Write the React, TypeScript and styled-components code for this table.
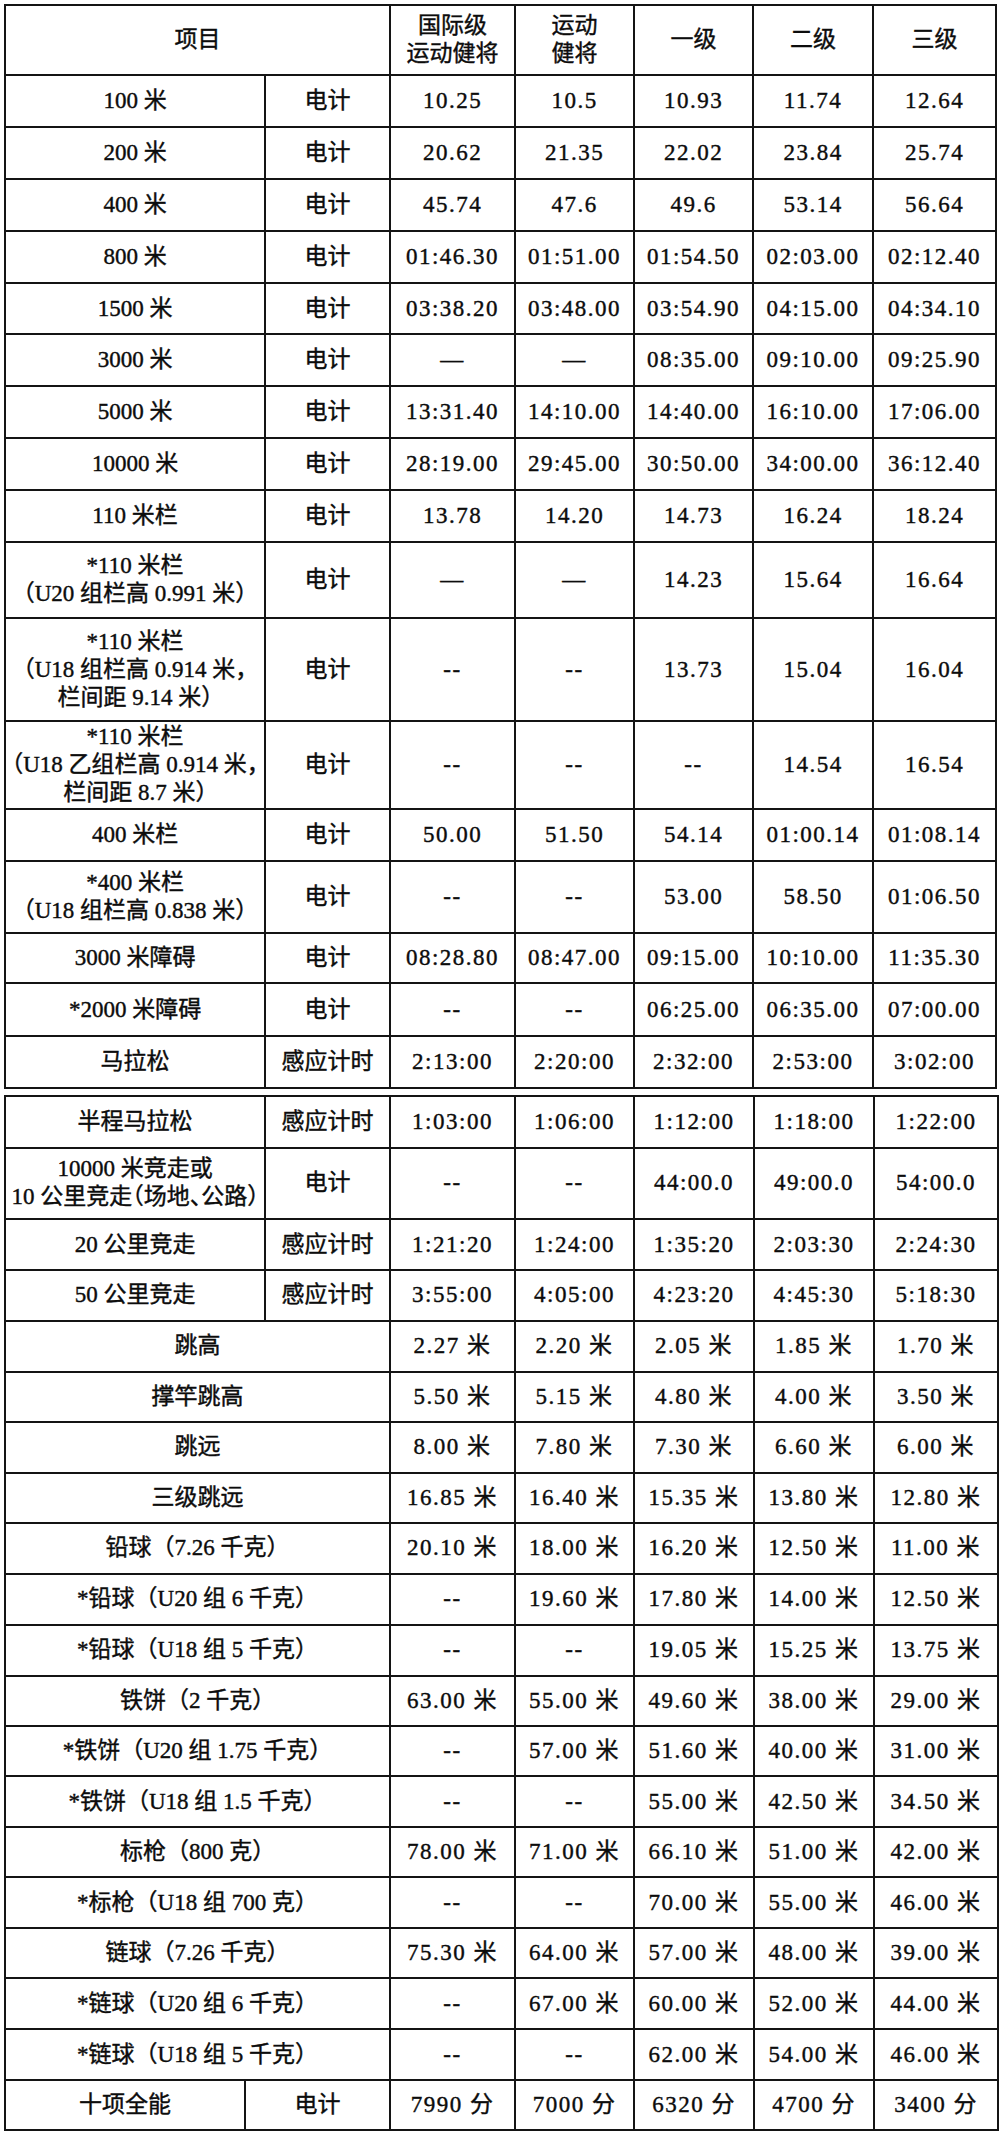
import React from 'react';
import styled, { createGlobalStyle } from 'styled-components';

const GlobalStyle = createGlobalStyle`
  body {
    margin: 0;
    background: #fff;
  }
`;

const Page = styled.div`
  padding: 3.7px 0 0 4px;
  display: flex;
  flex-direction: column;
  gap: 6px;
  font-family: 'Liberation Serif', 'Noto Sans CJK SC', serif;
  font-size: 23px;
  color: #0c0c0c;
`;

const Sheet = styled.div<{ $cols: string; $rows: string }>`
  display: grid;
  grid-template-columns: ${(p) => p.$cols};
  grid-template-rows: ${(p) => p.$rows};
  gap: 2px;
  padding: 2px;
  width: max-content;
  background: #141414;
`;

const Cell = styled.div<{ $span: number; $kind: 'name' | 'value' | 'tight' }>`
  grid-column: span ${(p) => p.$span};
  display: flex;
  align-items: center;
  justify-content: center;
  background: #fff;
  text-align: center;
  line-height: 28px;
  white-space: pre;
  -webkit-text-stroke: 0.4px currentColor;
  letter-spacing: ${(p) => (p.$kind === 'value' ? '1.5px' : '0')};
  font-feature-settings: ${(p) => (p.$kind === 'tight' ? '"halt"' : 'normal')};
`;

type Row = { h: number; cells: (string | [string, number])[] };

const T = '电计';
const G = '感应计时';

const upper: Row[] = [
  { h: 68.6, cells: [['项目', 2], '国际级\n运动健将', '运动\n健将', '一级', '二级', '三级'] },
  { h: 49.7, cells: ['100 米', T, '10.25', '10.5', '10.93', '11.74', '12.64'] },
  { h: 50, cells: ['200 米', T, '20.62', '21.35', '22.02', '23.84', '25.74'] },
  { h: 49.7, cells: ['400 米', T, '45.74', '47.6', '49.6', '53.14', '56.64'] },
  { h: 50, cells: ['800 米', T, '01:46.30', '01:51.00', '01:54.50', '02:03.00', '02:12.40'] },
  { h: 49.8, cells: ['1500 米', T, '03:38.20', '03:48.00', '03:54.90', '04:15.00', '04:34.10'] },
  { h: 49.5, cells: ['3000 米', T, '—', '—', '08:35.00', '09:10.00', '09:25.90'] },
  { h: 50, cells: ['5000 米', T, '13:31.40', '14:10.00', '14:40.00', '16:10.00', '17:06.00'] },
  { h: 50, cells: ['10000 米', T, '28:19.00', '29:45.00', '30:50.00', '34:00.00', '36:12.40'] },
  { h: 49.7, cells: ['110 米栏', T, '13.78', '14.20', '14.73', '16.24', '18.24'] },
  { h: 74.6, cells: ['*110 米栏\n（U20 组栏高 0.991 米）', T, '—', '—', '14.23', '15.64', '16.64'] },
  { h: 100.7, cells: ['*110 米栏\n（U18 组栏高 0.914 米，\n栏间距 9.14 米）', T, '--', '--', '13.73', '15.04', '16.04'] },
  { h: 86.3, cells: ['*110 米栏\n（U18 乙组栏高 0.914 米，\n栏间距 8.7 米）', T, '--', '--', '--', '14.54', '16.54'] },
  { h: 49.7, cells: ['400 米栏', T, '50.00', '51.50', '54.14', '01:00.14', '01:08.14'] },
  { h: 69.7, cells: ['*400 米栏\n（U18 组栏高 0.838 米）', T, '--', '--', '53.00', '58.50', '01:06.50'] },
  { h: 48.6, cells: ['3000 米障碍', T, '08:28.80', '08:47.00', '09:15.00', '10:10.00', '11:35.30'] },
  { h: 50.7, cells: ['*2000 米障碍', T, '--', '--', '06:25.00', '06:35.00', '07:00.00'] },
  { h: 49.7, cells: ['马拉松', G, '2:13:00', '2:20:00', '2:32:00', '2:53:00', '3:02:00'] },
];

const lower: Row[] = [
  { h: 50, cells: [['半程马拉松', 2], G, '1:03:00', '1:06:00', '1:12:00', '1:18:00', '1:22:00'] },
  { h: 69.6, cells: [['10000 米竞走或\n10 公里竞走（场地、公路）', 2], T, '--', '--', '44:00.0', '49:00.0', '54:00.0'] },
  { h: 48.7, cells: [['20 公里竞走', 2], G, '1:21:20', '1:24:00', '1:35:20', '2:03:30', '2:24:30'] },
  { h: 48.7, cells: [['50 公里竞走', 2], G, '3:55:00', '4:05:00', '4:23:20', '4:45:30', '5:18:30'] },
  { h: 49, cells: [['跳高', 3], '2.27 米', '2.20 米', '2.05 米', '1.85 米', '1.70 米'] },
  { h: 48, cells: [['撑竿跳高', 3], '5.50 米', '5.15 米', '4.80 米', '4.00 米', '3.50 米'] },
  { h: 49, cells: [['跳远', 3], '8.00 米', '7.80 米', '7.30 米', '6.60 米', '6.00 米'] },
  { h: 48.6, cells: [['三级跳远', 3], '16.85 米', '16.40 米', '15.35 米', '13.80 米', '12.80 米'] },
  { h: 48.7, cells: [['铅球（7.26 千克）', 3], '20.10 米', '18.00 米', '16.20 米', '12.50 米', '11.00 米'] },
  { h: 49, cells: [['*铅球（U20 组 6 千克）', 3], '--', '19.60 米', '17.80 米', '14.00 米', '12.50 米'] },
  { h: 48.7, cells: [['*铅球（U18 组 5 千克）', 3], '--', '--', '19.05 米', '15.25 米', '13.75 米'] },
  { h: 48.3, cells: [['铁饼（2 千克）', 3], '63.00 米', '55.00 米', '49.60 米', '38.00 米', '29.00 米'] },
  { h: 48.7, cells: [['*铁饼（U20 组 1.75 千克）', 3], '--', '57.00 米', '51.60 米', '40.00 米', '31.00 米'] },
  { h: 49, cells: [['*铁饼（U18 组 1.5 千克）', 3], '--', '--', '55.00 米', '42.50 米', '34.50 米'] },
  { h: 48, cells: [['标枪（800 克）', 3], '78.00 米', '71.00 米', '66.10 米', '51.00 米', '42.00 米'] },
  { h: 48.3, cells: [['*标枪（U18 组 700 克）', 3], '--', '--', '70.00 米', '55.00 米', '46.00 米'] },
  { h: 48.7, cells: [['链球（7.26 千克）', 3], '75.30 米', '64.00 米', '57.00 米', '48.00 米', '39.00 米'] },
  { h: 48.6, cells: [['*链球（U20 组 6 千克）', 3], '--', '67.00 米', '60.00 米', '52.00 米', '44.00 米'] },
  { h: 49, cells: [['*链球（U18 组 5 千克）', 3], '--', '--', '62.00 米', '54.00 米', '46.00 米'] },
  { h: 48, cells: ['十项全能', [T, 2], '7990 分', '7000 分', '6320 分', '4700 分', '3400 分'] },
];

// the event names sit left of the value columns; long ones get half-width brackets
function kindOf(text: string, col: number, span: number, lead: number) {
  if (col >= lead) return 'value';
  if (span <= 2 && text.split('\n').some((l) => l.length > 12)) return 'tight';
  return 'name';
}

function Table({ rows, cols, lead }: { rows: Row[]; cols: number[]; lead: number }) {
  return (
    <Sheet
      $cols={cols.map((c) => `${c}px`).join(' ')}
      $rows={rows.map((r) => `${r.h}px`).join(' ')}
    >
      {rows.flatMap((r, i) => {
        let col = 0;
        return r.cells.map((c, j) => {
          const [text, span] = typeof c === 'string' ? [c, 1] : c;
          const kind = i === 0 && lead === 2 ? 'name' : kindOf(text, col, span, lead);
          col += span;
          return (
            <Cell key={`${i}-${j}`} $span={span} $kind={kind}>
              {text}
            </Cell>
          );
        });
      })}
    </Sheet>
  );
}

export default function App() {
  return (
    <>
      <GlobalStyle />
      <Page>
        <Table rows={upper} lead={2} cols={[258, 123, 123, 117, 117, 118, 121]} />
        <Table rows={lower} lead={3} cols={[238, 18, 123, 123, 117, 118, 118, 122]} />
      </Page>
    </>
  );
}
